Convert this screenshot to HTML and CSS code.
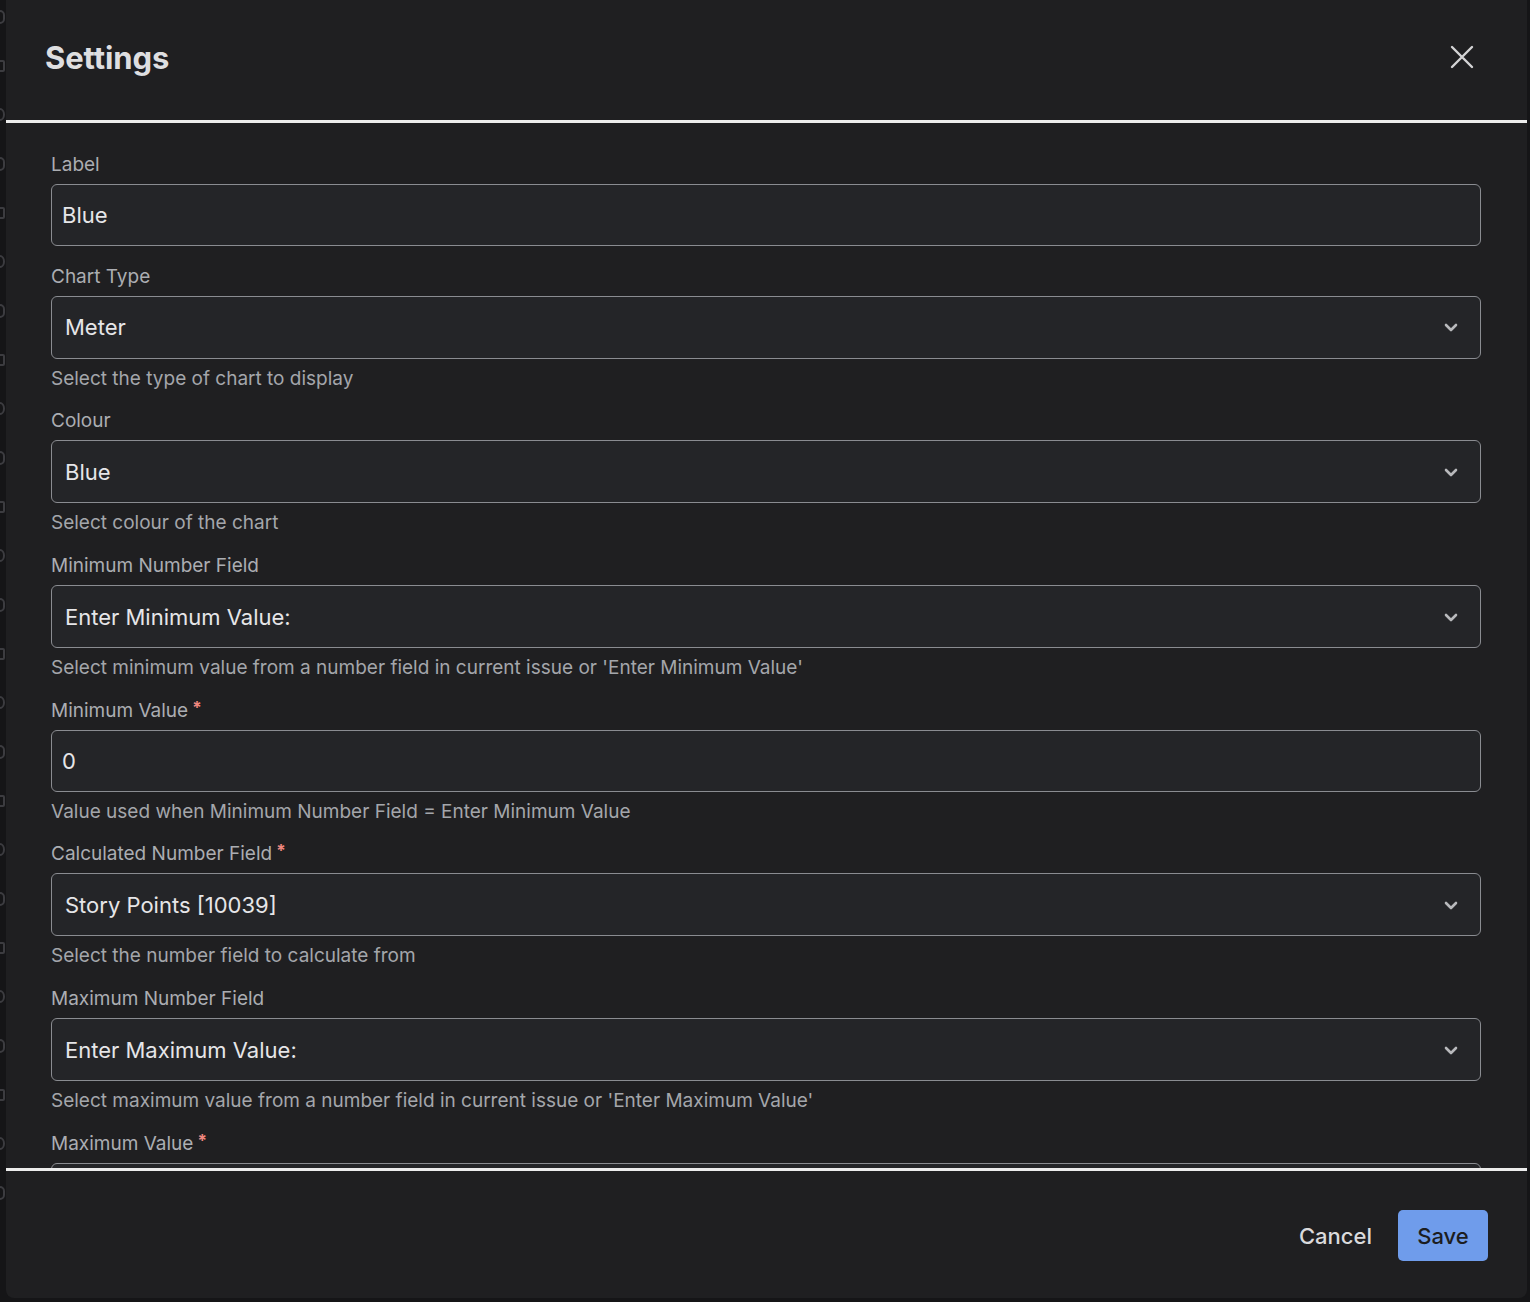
FILE: index.html
```html
<!DOCTYPE html>
<html lang="en">
<head>
<meta charset="utf-8">
<title>Settings</title>
<link rel="stylesheet" href="styles.css">
</head>
<body>
<div class="page">
  <div class="behind">
    <i class="mark m1"></i><i class="mark m2"></i><i class="mark m3"></i><i class="mark m1"></i><i class="mark m2"></i><i class="mark m3"></i><i class="mark m1"></i><i class="mark m2"></i><i class="mark m3"></i><i class="mark m1"></i><i class="mark m2"></i><i class="mark m3"></i><i class="mark m1"></i><i class="mark m2"></i><i class="mark m3"></i><i class="mark m1"></i><i class="mark m2"></i><i class="mark m3"></i><i class="mark m1"></i><i class="mark m2"></i><i class="mark m3"></i><i class="mark m1"></i><i class="mark m2"></i><i class="mark m3"></i><i class="mark m1"></i>
  </div>
  <div class="modal">
    <header class="modal-header">
      <h1 class="modal-title">Settings</h1>
      <button class="close-btn" aria-label="Close">
        <svg width="24" height="24" viewBox="0 0 24 24" fill="none" stroke="currentColor" stroke-width="2.4" stroke-linecap="round"><path d="M2 2L22 22M22 2L2 22"/></svg>
      </button>
    </header>
    <div class="divider"></div>
    <div class="modal-body">
      <div class="field">
        <label class="field-label">Label</label>
        <div class="input">Blue</div>
      </div>
      <div class="field">
        <label class="field-label">Chart Type</label>
        <div class="select"><span>Meter</span><svg class="chev" width="14" height="9" viewBox="0 0 14 9" fill="none" stroke="currentColor" stroke-width="2.6" stroke-linecap="round" stroke-linejoin="round"><path d="M2 2L7 7L12 2"/></svg></div>
        <div class="helper">Select the type of chart to display</div>
      </div>
      <div class="field">
        <label class="field-label">Colour</label>
        <div class="select"><span>Blue</span><svg class="chev" width="14" height="9" viewBox="0 0 14 9" fill="none" stroke="currentColor" stroke-width="2.6" stroke-linecap="round" stroke-linejoin="round"><path d="M2 2L7 7L12 2"/></svg></div>
        <div class="helper">Select colour of the chart</div>
      </div>
      <div class="field">
        <label class="field-label">Minimum Number Field</label>
        <div class="select"><span>Enter Minimum Value:</span><svg class="chev" width="14" height="9" viewBox="0 0 14 9" fill="none" stroke="currentColor" stroke-width="2.6" stroke-linecap="round" stroke-linejoin="round"><path d="M2 2L7 7L12 2"/></svg></div>
        <div class="helper">Select minimum value from a number field in current issue or 'Enter Minimum Value'</div>
      </div>
      <div class="field">
        <label class="field-label">Minimum Value<span class="req">*</span></label>
        <div class="input">0</div>
        <div class="helper">Value used when Minimum Number Field = Enter Minimum Value</div>
      </div>
      <div class="field">
        <label class="field-label">Calculated Number Field<span class="req">*</span></label>
        <div class="select"><span>Story Points [10039]</span><svg class="chev" width="14" height="9" viewBox="0 0 14 9" fill="none" stroke="currentColor" stroke-width="2.6" stroke-linecap="round" stroke-linejoin="round"><path d="M2 2L7 7L12 2"/></svg></div>
        <div class="helper">Select the number field to calculate from</div>
      </div>
      <div class="field">
        <label class="field-label">Maximum Number Field</label>
        <div class="select"><span>Enter Maximum Value:</span><svg class="chev" width="14" height="9" viewBox="0 0 14 9" fill="none" stroke="currentColor" stroke-width="2.6" stroke-linecap="round" stroke-linejoin="round"><path d="M2 2L7 7L12 2"/></svg></div>
        <div class="helper">Select maximum value from a number field in current issue or 'Enter Maximum Value'</div>
      </div>
      <div class="field">
        <label class="field-label">Maximum Value<span class="req">*</span></label>
        <div class="input"></div>
      </div>
    </div>
    <div class="divider"></div>
    <footer class="modal-footer">
      <button class="btn-cancel">Cancel</button>
      <button class="btn-save">Save</button>
    </footer>
  </div>
</div>
</body>
</html>
```

FILE: styles.css
```css
* { box-sizing: border-box; }
html, body { margin: 0; padding: 0; }
body {
  background: #151517;
  font-family: Inter, "Noto Sans", "DejaVu Sans", sans-serif;
  width: 1530px;
  height: 1302px;
  overflow: hidden;
}
.page {
  display: flex;
  height: 1302px;
}
.behind {
  width: 6px;
  flex: none;
  overflow: hidden;
  display: flex;
  flex-direction: column;
  gap: 36px;
  padding-top: 10px;
}
.mark {
  display: block;
  width: 10px;
  height: 14px;
  margin-left: -5px;
  border: 2px solid #3c3c40;
  border-radius: 6px;
}
.m2 { border-radius: 2px; height: 12px; }
.m3 { border-radius: 50%; height: 13px; }
.modal {
  width: 1521px;
  height: 1298px;
  flex: none;
  background: #1f1f21;
  border-radius: 0 0 8px 8px;
  display: flex;
  flex-direction: column;
  overflow: hidden;
}
.modal-header {
  height: 120px;
  flex: none;
  display: flex;
  align-items: center;
  justify-content: space-between;
  padding: 0 53px 6px 39px;
}
.modal-title {
  margin: 0;
  font-size: 31px;
  font-weight: 700;
  color: #dedee0;
  letter-spacing: -0.1px;
}
.close-btn {
  background: none;
  border: 0;
  padding: 0;
  color: #d4d4d6;
  display: flex;
}
.divider {
  height: 3px;
  flex: none;
  background: #ececec;
}
.modal-body {
  flex: 1;
  min-height: 0;
  overflow: hidden;
  padding: 30px 46px 0 45px;
  display: flex;
  flex-direction: column;
  gap: 18.7px;
}
.field {
  display: flex;
  flex-direction: column;
  flex: none;
}
.field-label {
  font-size: 19px;
  line-height: 24px;
  color: #abadb2;
  margin-bottom: 7px;
}
.req {
  color: #f0877f;
  font-size: 17px;
  font-weight: 700;
  margin-left: 4px;
  position: relative;
  top: -3px;
}
.input, .select {
  border: 1.5px solid #8a8c91;
  border-radius: 6px;
  background: #242528;
  color: #e6e6e8;
  font-size: 22px;
  display: flex;
  align-items: center;
  flex: none;
}
.input {
  height: 62px;
  padding-left: 10px;
}
.select {
  height: 63px;
  padding: 0 22px 0 13px;
  justify-content: space-between;
}
.chev { color: #b8b9bc; margin-top: 1px; }
.helper {
  margin-top: 8px;
  font-size: 19px;
  line-height: 24px;
  color: #a4a6ab;
}
.modal-footer {
  height: 127px;
  flex: none;
  display: flex;
  align-items: center;
  justify-content: flex-end;
  padding: 2px 39px 0 0;
}
.btn-cancel {
  background: none;
  border: 0;
  font-family: inherit;
  font-size: 22px;
  font-weight: 500;
  color: #dadadc;
  padding: 0 14px;
  height: 51px;
  margin-right: 12px;
}
.btn-save {
  width: 90px;
  height: 51px;
  border: 0;
  border-radius: 5px;
  background: #6f9ceb;
  color: #1c1d20;
  font-family: inherit;
  font-size: 22px;
  font-weight: 500;
}
```
